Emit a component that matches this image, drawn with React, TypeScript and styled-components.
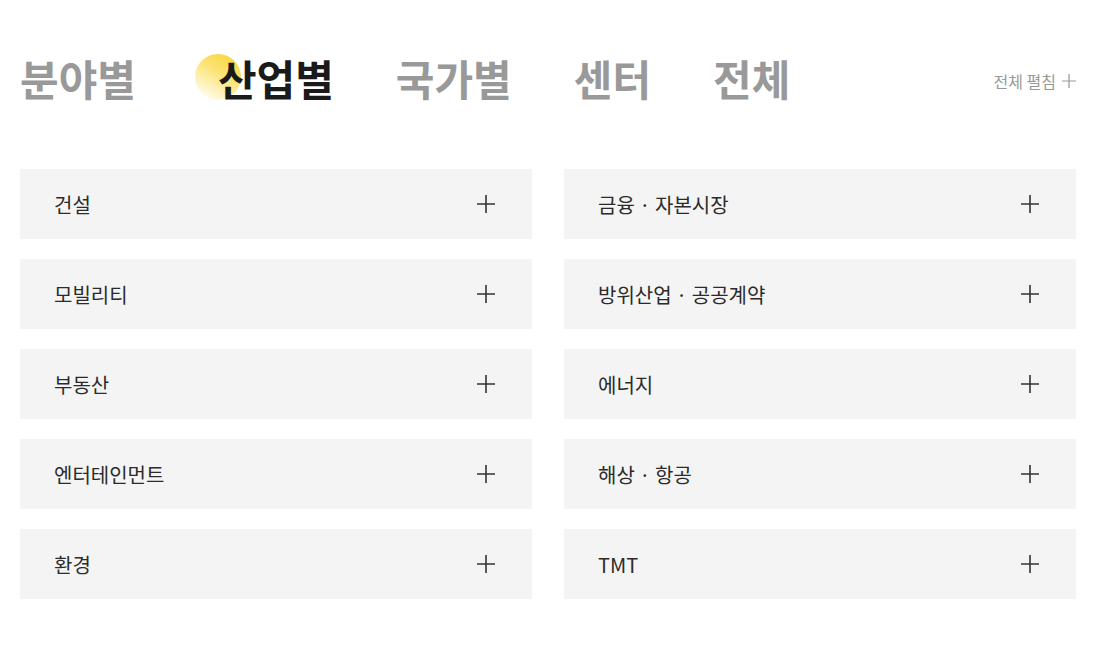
import React from "react";
import styled, { createGlobalStyle } from "styled-components";

const Global = createGlobalStyle`
  html, body { margin: 0; padding: 0; background: #fff; }
  body { font-family: "Noto Sans CJK KR", "Noto Sans", sans-serif; color: #333; }
  * { box-sizing: border-box; }
`;

const Page = styled.div`
  width: 1056px;
  margin-left: 20px;
  padding-top: 48px;
`;

const Header = styled.div`
  display: flex;
  align-items: center;
  justify-content: space-between;
`;

const TabList = styled.ul`
  display: flex;
  align-items: center;
  gap: 62px;
  margin: 0;
  padding: 0;
  list-style: none;
`;

const Tab = styled.li<{ $active?: boolean }>`
  position: relative;
  font-size: 42px;
  line-height: 60px;
  font-weight: 700;
  color: ${(p) => (p.$active ? "#1a1a1a" : "#999")};
  padding-left: ${(p) => (p.$active ? "23px" : "0")};
  margin-left: ${(p) => (p.$active ? "-3px" : "0")};
  cursor: pointer;
  span { position: relative; z-index: 1; }
  ${(p) =>
    p.$active &&
    `
    &::before {
      content: "";
      position: absolute;
      left: 0;
      top: 50%;
      width: 46px;
      height: 46px;
      margin-top: -24px;
      border-radius: 50%;
      background: linear-gradient(210deg, #f7d230 0%, #fbe57a 45%, #ffffff 95%);
    }
  `}
`;

const ExpandAll = styled.button`
  display: flex;
  align-items: center;
  gap: 6px;
  border: 0;
  background: none;
  padding: 0;
  margin-top: 6px;
  font-family: inherit;
  font-size: 16px;
  color: #999;
  cursor: pointer;
`;

const Grid = styled.div`
  display: grid;
  grid-template-columns: 1fr 1fr;
  column-gap: 32px;
  row-gap: 20px;
  margin-top: 61px;
`;

const Card = styled.div`
  height: 70px;
  background: #f4f4f4;
  display: flex;
  align-items: center;
  justify-content: space-between;
  padding: 0 37px 0 34px;
  font-size: 20px;
  color: #2b2b2b;
  cursor: pointer;
`;

const Plus = ({ size, color, w }: { size: number; color: string; w: number }) => (
  <svg width={size} height={size} viewBox="0 0 18 18" fill="none">
    <path d="M9 0V18M0 9H18" stroke={color} strokeWidth={w} />
  </svg>
);

const left = ["건설", "모빌리티", "부동산", "엔터테인먼트", "환경"];
const right = ["금융 · 자본시장", "방위산업 · 공공계약", "에너지", "해상 · 항공", "TMT"];

const tabs = ["분야별", "산업별", "국가별", "센터", "전체"];

export default function App() {
  const items: string[] = [];
  left.forEach((l, i) => {
    items.push(l, right[i]);
  });
  return (
    <>
      <Global />
      <Page>
        <Header>
          <TabList>
            {tabs.map((t) => (
              <Tab key={t} $active={t === "산업별"}>
                <span>{t}</span>
              </Tab>
            ))}
          </TabList>
          <ExpandAll>
            전체 펼침
            <Plus size={14} color="#999" w={1.6} />
          </ExpandAll>
        </Header>
        <Grid>
          {items.map((it) => (
            <Card key={it}>
              {it}
              <Plus size={18} color="#333" w={1.6} />
            </Card>
          ))}
        </Grid>
      </Page>
    </>
  );
}
